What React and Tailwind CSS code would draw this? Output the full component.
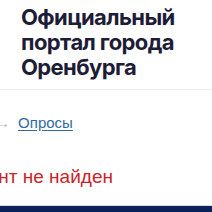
export default function App() {
  return (
    <div className="w-[212px] h-[212px] overflow-hidden bg-white flex flex-col">
      <header className="pl-[21px] pt-[5px] pb-[9px] border-b border-[#ebebef]">
        <h1 className="font-['Inter',sans-serif] font-bold text-[22px] leading-[25px] text-[#1d1d38] tracking-[-0.6px]">
          Официальный портал города Оренбурга
        </h1>
      </header>
      <nav className="mt-[24px] -ml-[70px] flex items-center gap-[8px] font-['Liberation_Sans',sans-serif] text-[15px] leading-[18px] whitespace-nowrap">
        <span className="text-[#3b6ea5] underline">Главная</span>
        <span className="text-[#b8bcc4]">→</span>
        <a href="#" className="text-[#2f6aa5] underline underline-offset-2">Опросы</a>
      </nav>
      <p className="mt-[34px] -ml-[60px] font-['Liberation_Sans',sans-serif] text-[19px] leading-[22px] text-[#c8242a] whitespace-nowrap">
        Элемент не найден
      </p>
      <div className="mt-auto border-t border-[#d6dae2] h-[7px] bg-[#0b2158]" />
    </div>
  );
}
